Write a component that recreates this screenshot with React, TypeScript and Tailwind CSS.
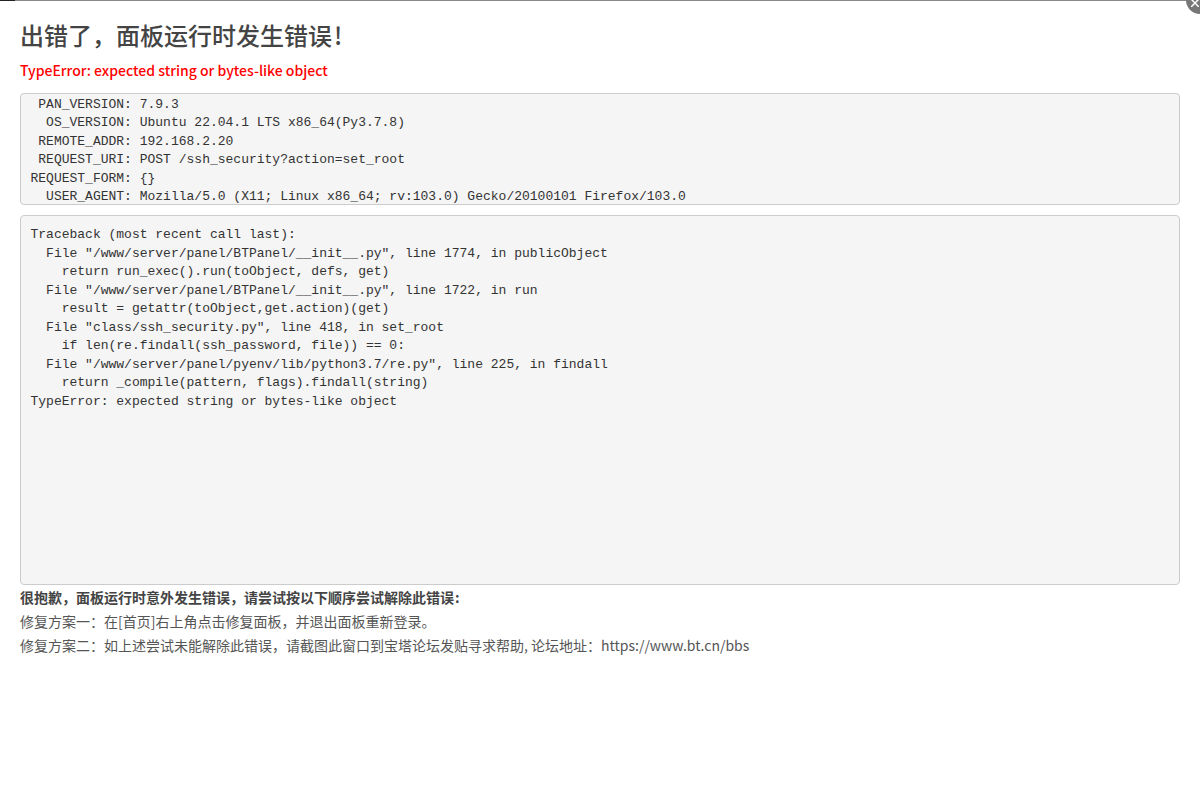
const ENV_INFO = ` PAN_VERSION: 7.9.3
  OS_VERSION: Ubuntu 22.04.1 LTS x86_64(Py3.7.8)
 REMOTE_ADDR: 192.168.2.20
 REQUEST_URI: POST /ssh_security?action=set_root
REQUEST_FORM: {}
  USER_AGENT: Mozilla/5.0 (X11; Linux x86_64; rv:103.0) Gecko/20100101 Firefox/103.0`;

const TRACEBACK = `Traceback (most recent call last):
  File "/www/server/panel/BTPanel/__init__.py", line 1774, in publicObject
    return run_exec().run(toObject, defs, get)
  File "/www/server/panel/BTPanel/__init__.py", line 1722, in run
    result = getattr(toObject,get.action)(get)
  File "class/ssh_security.py", line 418, in set_root
    if len(re.findall(ssh_password, file)) == 0:
  File "/www/server/panel/pyenv/lib/python3.7/re.py", line 225, in findall
    return _compile(pattern, flags).findall(string)
TypeError: expected string or bytes-like object`;

const PRE_CLASS =
  "m-0 overflow-hidden rounded border border-[#ccc] bg-[#f5f5f5] px-[9.5px] font-['Liberation_Mono',monospace] text-[13px] leading-[18.5px] text-[#333]";

export default function App() {
  return (
    <div className="relative h-[810px] w-[1200px] overflow-hidden bg-white font-['Noto_Sans_CJK_SC','Noto_Sans',sans-serif] text-[#333]">
      {/* Top edge of the layer */}
      <div className="flex h-px">
        <div className="w-[15px] bg-[#222]" />
        <div className="flex-1 bg-[#888]" />
      </div>

      {/* Close button */}
      <div className="absolute right-[-14px] top-[-14px] h-7 w-7 rounded-full bg-[#777]">
        <svg className="absolute bottom-[7px] left-[5px] h-2 w-2" viewBox="0 0 8 8" stroke="#fff" strokeWidth="1.5">
          <path d="M0 0l8 8M8 0L0 8" />
        </svg>
      </div>

      <div className="px-5">
        <h1 className="mt-[16px] h-[37px] text-[24px] font-medium leading-[36px] text-[#444]">
          出错了，面板运行时发生错误<span className="ml-[2px]">!</span>
        </h1>
        <p className="mt-[6px] h-[20px] text-[14px] font-medium leading-[20px] text-[#f00]">
          TypeError: expected string or bytes-like object
        </p>
        <pre className={`${PRE_CLASS} mt-[13px] h-[112px] pt-[1.5px]`}>{ENV_INFO}</pre>
        <pre className={`${PRE_CLASS} mt-[10px] h-[370px] pt-[10px]`}>{TRACEBACK}</pre>
        <div className="text-[14px] leading-[24px] text-[#555]">
          <p className="h-6 font-bold text-[#444]">很抱歉，面板运行时意外发生错误，请尝试按以下顺序尝试解除此错误<span className="ml-px">:</span></p>
          <p className="h-6">修复方案一：在[首页]右上角点击修复面板，并退出面板重新登录。</p>
          <p className="h-6">修复方案二：如上述尝试未能解除此错误，请截图此窗口到宝塔论坛发贴寻求帮助, 论坛地址：https://www.bt.cn/bbs</p>
        </div>
      </div>
    </div>
  );
}
